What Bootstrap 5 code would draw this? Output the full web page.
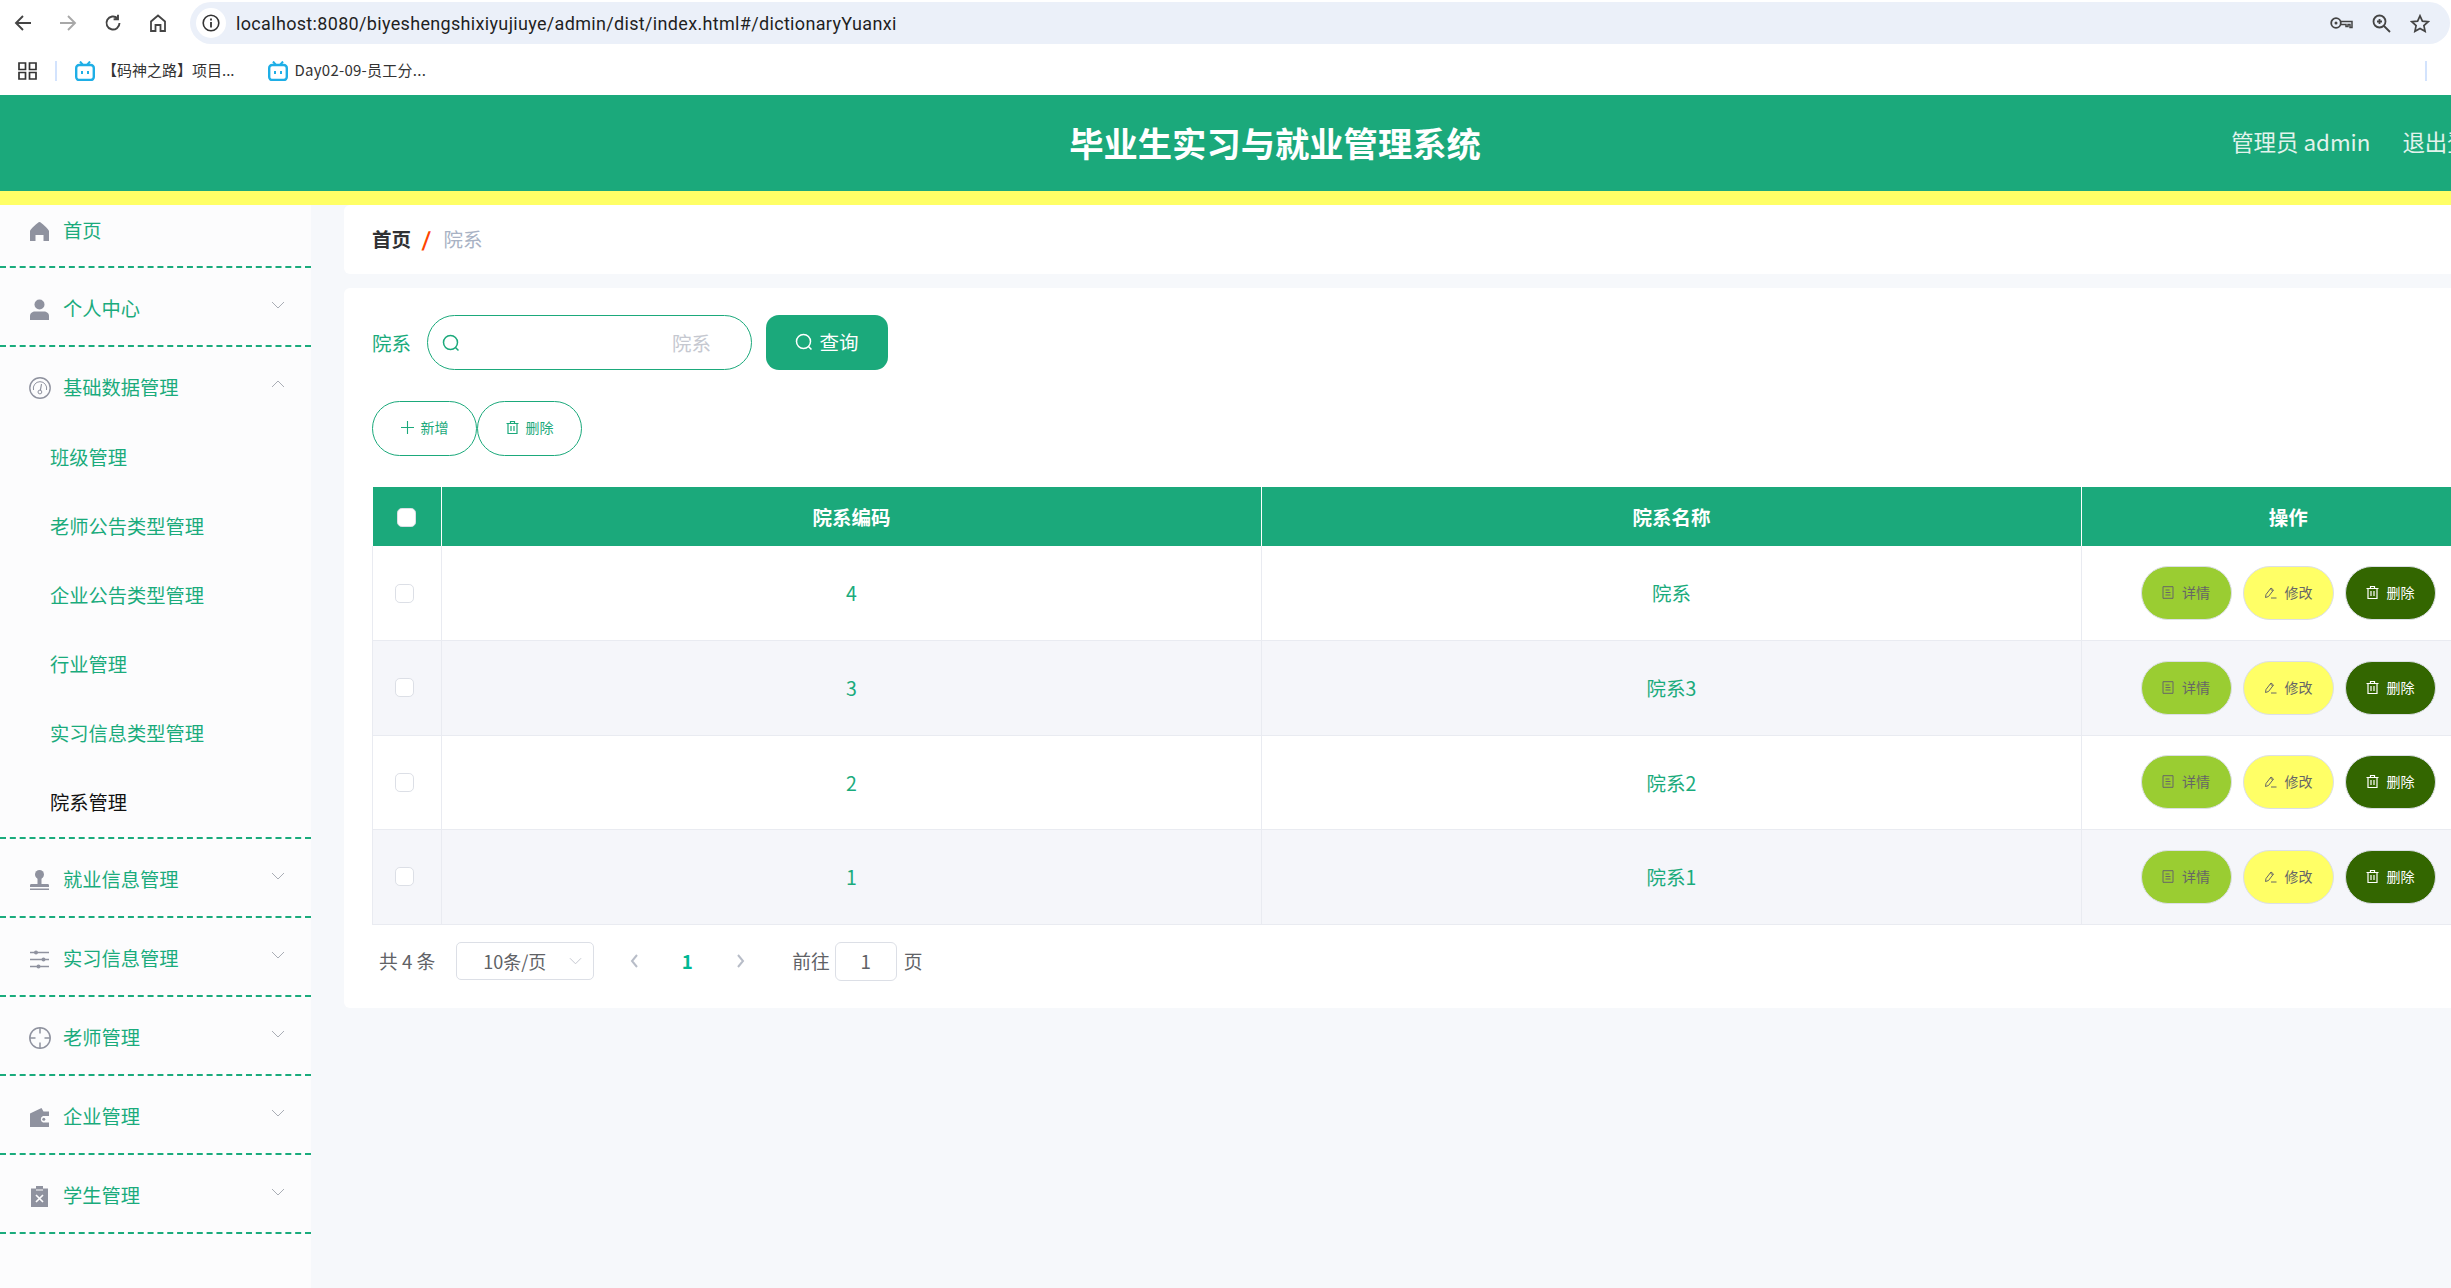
<!DOCTYPE html>
<html lang="zh-CN">
<head>
<meta charset="utf-8">
<title>毕业生实习与就业管理系统</title>
<link href="https://cdn.jsdelivr.net/npm/bootstrap@5.3.0/dist/css/bootstrap.min.css" rel="stylesheet">
<style>
html,body{height:100%;overflow:hidden}
body{background:#f6f8fb;font-family:"Noto Sans CJK SC","Noto Sans",sans-serif;width:2451px}
.toolbar{height:46px;background:#fff}
.tb-nav{width:190px;flex:none}
.tb-icon{width:45px;flex:none;justify-content:center}
.urlbar{width:2260px;height:42px;margin:2px 0;background:#ebf0f9;border-radius:21px;padding:0 20px 0 6px}
.url-info{width:30px;height:30px;background:#fff;border-radius:50%;margin-right:10px}
.url-text{font-family:"Roboto",sans-serif;font-size:18px;color:#1f1f1f;letter-spacing:.33px;white-space:nowrap}
.url-end{gap:19px}
.bookmarks{height:49px;background:#fff;padding-left:18px;font-size:15px;color:#333;white-space:nowrap}
.bm-sep{width:2px;height:20px;background:#d3e3fd;margin:0 18px 0 18px}
.bm-sep-r{margin:0 24px 0 auto}
.bm{gap:7px;margin-right:33px}
.bm-latin{letter-spacing:.25px}
.app-header{width:2550px;height:96px;background:#1ba97b;color:#fff}
.app-title{font-size:34.3px;font-weight:700;margin:0}
.app-user{right:0;top:0;height:96px;padding:0 58px 3px 0;font-size:22.4px;color:#e2f3ec;gap:32px}
.stripe{height:14px;background:#ffff66;width:2550px}
.layout{width:2550px;height:1083px}
.sidebar{width:311px;flex:none;background:#fcfcfd;color:#1aab7c;font-size:19.25px}
.side-item{border-bottom:2px dashed #1aab7c}
.side-row{height:77px;padding:5px 26px 0 30px;line-height:1}
.side-row>span{padding-bottom:1px}
.side-row.first{height:61px;padding:0 26px 9px 30px}
.side-row.open{height:76px;padding-top:6px}
.side-ico{width:19px;height:21px;margin-right:14px;flex:none;color:#8f929f}
.side-ico.wide{width:22px;height:22px;margin:0 12.5px 0 -1.5px}
.chev{margin:-8px 0 0 auto;color:#a9adb5}
.sub{height:69px;padding:0 0 0 50px;line-height:1}
.sub.active{color:#111}
.main{flex:1;min-width:0;padding:0 27px 0 33px}
.crumbs{height:69px;background:#fff;border-radius:6px;margin-bottom:14px;padding:0 28px 2px;font-size:19.5px}
.crumbs b{color:#303133;font-weight:700}
.crumbs i{color:#ff4500;font-weight:800;margin:0 13px 0 12px;font-style:normal;transform:skewX(-8deg)}
.crumbs span{color:#a8b2c4}
.panel{background:#fff;border-radius:6px;padding:27px 28px 0;height:720px}
.filter-label{color:#1aab7c;font-size:19.5px;width:38px;margin-right:17px;white-space:nowrap}
.search{width:325px;height:55px;border:1.5px solid #1ba97b;border-radius:28px;padding:0 40px 0 14px;margin-right:14px;background:#fff}
.search input{border:0;background:transparent;padding:0;font-size:19.5px;text-align:right;box-shadow:none;font-family:inherit}
.search input::placeholder{color:#c5c8d0;opacity:1}
.btn-query{width:122px;height:55px;background:#1ba97b;color:#fff;border:0;border-radius:13px;font-size:19.5px;gap:6px;padding:0 0 2px}
.btn-query:hover{background:#1ba97b;color:#fff}
.tools{margin:31px 0 31px;gap:0}
.btn-tool{width:105px;height:55px;border:1.5px solid #1ba97b;border-radius:28px;background:#fff;color:#1ba97b;font-size:14px;gap:7px;padding:0 0 2px}
.grid{table-layout:fixed;width:100%;margin:0;border-color:#e9ebf1;color:#1aab7c;font-size:19.5px;line-height:1.2}
.grid th{background:#1ba97b;color:#fff;height:59px;padding:1px 0 0;text-align:center;vertical-align:middle;font-weight:700;border-color:#fff;border-width:0 1px 0 0}
.grid td{height:94.5px;padding:0;text-align:center;vertical-align:middle;border-width:0 1px 1px 1px;border-color:#e9ebf1}
.grid tbody tr:nth-child(even) td{background:#f5f6fa}
.grid th:last-child{border-right:0}
.check{display:block;width:19px;height:19px;margin:0 auto!important;border-radius:3px;border:1px solid #dcdfe6;background:#fff;float:none}
td .check{position:relative;left:-3px}
.acts{gap:11px;justify-content:center}
.act{width:91px;height:54px;border-radius:27px;border:1.5px solid #dcdfe6;font-size:14px;color:#666;gap:8px;padding:0 0 1px}
.act:hover{color:#666}
.act-view,.act-view:hover{background:#9acd32}
.act-edit,.act-edit:hover{background:#ffff66}
.act-del,.act-del:hover{background:#336600;color:#fff}
.pager{height:76px;padding:0 0 3px 7px;color:#606266;font-size:18.75px;white-space:nowrap}
.pg-select{width:138px;height:38px;border:1.5px solid #dcdfe6;border-radius:5px;margin:0 0 0 21px;padding:0 11px 0 26px;color:#606266;font-size:18px}
.pg-nav{width:14px;color:#b8bdc8}
.pg-prev{margin-left:33px}
.pg-cur{color:#00b894;font-weight:700;width:12px;text-align:center;margin:0 41px 0 40px}
.pg-goto{margin-left:44px}
.pg-input{width:62px;height:39px;border:1.5px solid #dcdfe6;border-radius:6px;margin:0 7px 0 5px}
</style>
</head>
<body>
<svg width="0" height="0" class="d-block position-absolute">
<defs>
<symbol id="i-doc" viewBox="0 0 12 13"><path d="M1 .7h10v11.600H1zM3.500 4h4M3.500 6.500h5M3.500 9h5" fill="none" stroke="currentColor"/></symbol>
<symbol id="i-pen" viewBox="0 0 13 13"><path d="M1.500 11.500l.5-3 5-6.500 2.500 2-5 6.500zM6.300 3l2.500 2M7 12h5.500" fill="none" stroke="currentColor"/></symbol>
<symbol id="i-trash" viewBox="0 0 13 13"><path d="M.5 2.500h12M4.500 2.500v-2h4v2M2 2.500h9v10H2zM5 5v5M8 5v5" fill="none" stroke="currentColor" stroke-width="1.200"/></symbol>
<symbol id="i-search" viewBox="0 0 18 18"><circle cx="8.500" cy="8.500" r="7" fill="none" stroke="currentColor" stroke-width="1.500"/><path d="M13.500 13.500l3 3" stroke="currentColor" stroke-width="1.500"/></symbol>
<symbol id="i-down" viewBox="0 0 14 8"><path d="M1 1l6 6 6-6" fill="none" stroke="currentColor" stroke-width="1"/></symbol>
<symbol id="i-tv" viewBox="0 0 20 20"><path d="M5 .5l3 3.500M15 .5l-3 3.500" stroke="#1eaee6" stroke-width="2"/><rect x="1.200" y="4" width="17.600" height="15" rx="3" fill="#fff" stroke="#1eaee6" stroke-width="2.400"/><path d="M7 10v3M13 10v3" stroke="#1eaee6" stroke-width="2"/></symbol>
</defs>
</svg>

<div class="toolbar d-flex align-items-center">
  <div class="tb-nav d-flex align-items-center">
    <div class="tb-icon d-flex"><svg width="18" height="18" viewBox="0 0 18 18"><path d="M17 9H2M9 2L2 9l7 7" fill="none" stroke="#444" stroke-width="1.900"/></svg></div>
    <div class="tb-icon d-flex"><svg width="18" height="18" viewBox="0 0 18 18"><path d="M1 9h15M9 2l7 7-7 7" fill="none" stroke="#a8a8a8" stroke-width="1.900"/></svg></div>
    <div class="tb-icon d-flex"><svg width="18" height="18" viewBox="0 0 18 18"><path d="M15.500 9a6.500 6.500 0 1 1-2-4.700M14 .8v4.400H9.600" fill="none" stroke="#444" stroke-width="1.900"/></svg></div>
    <div class="tb-icon d-flex"><svg width="18" height="18" viewBox="0 0 18 18"><path d="M2 17V7.500L9 1.500l7 6V17h-4.500v-6h-5v6z" fill="none" stroke="#444" stroke-width="1.800"/></svg></div>
  </div>
  <div class="urlbar d-flex align-items-center">
    <div class="url-info d-flex align-items-center justify-content-center"><svg width="18" height="18" viewBox="0 0 18 18"><circle cx="9" cy="9" r="7.800" fill="none" stroke="#333" stroke-width="1.600"/><path d="M9 8v5.500M9 4.500v2" stroke="#333" stroke-width="1.800"/></svg></div>
    <span class="url-text">localhost:8080/biyeshengshixiyujiuye/admin/dist/index.html#/dictionaryYuanxi</span>
    <div class="url-end ms-auto d-flex align-items-center">
      <svg width="23" height="14" viewBox="0 0 23 14"><circle cx="6" cy="7" r="4.800" fill="none" stroke="#444" stroke-width="1.800"/><circle cx="6" cy="7" r="1.500" fill="#444"/><path d="M11 5.500h11v6h-2V8.500h-2v2h-2v-2h-5" fill="none" stroke="#444" stroke-width="1.500"/></svg>
      <svg width="19" height="19" viewBox="0 0 19 19"><circle cx="7.500" cy="7.500" r="6" fill="none" stroke="#444" stroke-width="1.800"/><path d="M12 12l6 6M7.500 5v5M5 7.500h5" stroke="#444" stroke-width="1.800"/></svg>
      <svg width="20" height="19" viewBox="0 0 20 19"><path d="M10 1.800l2.400 5.300 5.800.6-4.300 3.900 1.200 5.700-5.100-2.900-5.100 2.900 1.200-5.700-4.300-3.900 5.800-.6z" fill="none" stroke="#444" stroke-width="1.700"/></svg>
    </div>
  </div>
</div>
<div class="bookmarks d-flex align-items-center">
  <svg width="19" height="18" viewBox="0 0 19 18"><path d="M1 1h6.500v6.500H1zM11.500 1H18v6.500h-6.500zM1 10.500h6.500V17H1zM11.500 10.500H18V17h-6.500z" fill="none" stroke="#333" stroke-width="1.700"/></svg>
  <div class="bm-sep"></div>
  <div class="bm d-flex align-items-center"><svg width="20" height="20"><use href="#i-tv"/></svg><span>【码神之路】项目...</span></div>
  <div class="bm d-flex align-items-center"><svg width="20" height="20"><use href="#i-tv"/></svg><span class="bm-latin">Day02-09-员工分...</span></div>
  <div class="bm-sep bm-sep-r"></div>
</div>

<header class="app-header position-relative d-flex align-items-center justify-content-center">
  <h1 class="app-title">毕业生实习与就业管理系统</h1>
  <div class="app-user position-absolute d-flex align-items-center"><span>管理员 admin</span><span>退出登录</span></div>
</header>
<div class="stripe"></div>

<div class="layout d-flex">
  <aside class="sidebar">
    <ul class="list-unstyled m-0">
      <li class="side-item"><div class="side-row first d-flex align-items-center">
        <svg class="side-ico" viewBox="0 0 19 21"><path d="M9.500 1C11 1 19 8.500 19 10v10h-5.500v-6h-8v6H0V10C0 8.500 8 1 9.500 1z" fill="currentColor"/></svg><span>首页</span></div></li>
      <li class="side-item"><div class="side-row d-flex align-items-center">
        <svg class="side-ico" viewBox="0 0 19 21"><circle cx="9.500" cy="5.500" r="5" fill="currentColor"/><path d="M0 21v-4c0-3 2.500-4.500 5-4.500h9c2.500 0 5 1.500 5 4.500v4z" fill="currentColor"/></svg><span>个人中心</span><svg class="chev" width="14" height="8"><use href="#i-down"/></svg></div></li>
      <li class="side-item"><div class="side-row open d-flex align-items-center">
        <svg class="side-ico wide" viewBox="0 0 22 22"><circle cx="11" cy="11" r="10.200" fill="none" stroke="currentColor" stroke-width="1.400"/><path d="M4.500 13a6.700 6.700 0 1 1 13 0" fill="none" stroke="currentColor"/><path d="M12.500 7l-1.200 6.500" stroke="currentColor" stroke-width="1.200"/><circle cx="10.900" cy="15" r="1.900" fill="none" stroke="currentColor"/></svg><span>基础数据管理</span><svg class="chev" width="14" height="8" style="transform:scaleY(-1)"><use href="#i-down"/></svg></div>
        <div class="sub d-flex align-items-center">班级管理</div>
        <div class="sub d-flex align-items-center">老师公告类型管理</div>
        <div class="sub d-flex align-items-center">企业公告类型管理</div>
        <div class="sub d-flex align-items-center">行业管理</div>
        <div class="sub d-flex align-items-center">实习信息类型管理</div>
        <div class="sub active d-flex align-items-center">院系管理</div>
      </li>
      <li class="side-item"><div class="side-row d-flex align-items-center">
        <svg class="side-ico" viewBox="0 0 19 21"><circle cx="9.500" cy="4.500" r="4.500" fill="currentColor"/><path d="M7.500 8h4v6h6c1 0 1.500.5 1.500 1.500V17H0v-1.500C0 14.500.5 14 1.500 14h6zM0 18.500h19V20H0z" fill="currentColor"/></svg><span>就业信息管理</span><svg class="chev" width="14" height="8"><use href="#i-down"/></svg></div></li>
      <li class="side-item"><div class="side-row d-flex align-items-center">
        <svg class="side-ico" viewBox="0 0 19 21"><path d="M0 3.500h19M0 10.500h19M0 17.500h19" stroke="currentColor" stroke-width="1.300"/><circle cx="6" cy="3.500" r="2" fill="currentColor"/><circle cx="13.500" cy="10.500" r="2" fill="currentColor"/><circle cx="8.500" cy="17.500" r="2" fill="currentColor"/></svg><span>实习信息管理</span><svg class="chev" width="14" height="8"><use href="#i-down"/></svg></div></li>
      <li class="side-item"><div class="side-row d-flex align-items-center">
        <svg class="side-ico wide" viewBox="0 0 22 22"><circle cx="11" cy="11" r="10.200" fill="none" stroke="currentColor" stroke-width="1.500"/><path d="M11 1v5.500M11 15.500V21M1 11h5.500M15.500 11H21" stroke="currentColor" stroke-width="1.500"/></svg><span>老师管理</span><svg class="chev" width="14" height="8"><use href="#i-down"/></svg></div></li>
      <li class="side-item"><div class="side-row d-flex align-items-center">
        <svg class="side-ico" viewBox="0 0 19 21"><path d="M0 6.500L11.500 1l2 3.500H19V9h-6a3.500 3.500 0 0 0 0 6.500h6V20H0z" fill="currentColor"/><circle cx="13.800" cy="12.300" r="1.500" fill="currentColor"/></svg><span>企业管理</span><svg class="chev" width="14" height="8"><use href="#i-down"/></svg></div></li>
      <li class="side-item"><div class="side-row d-flex align-items-center">
        <svg class="side-ico" viewBox="0 0 19 21"><path d="M6 0h7v2.500h5V21H1V2.500h5z" fill="currentColor"/><path d="M6 9l7 7M13 9l-7 7" stroke="#fcfcfd" stroke-width="1.700"/><path d="M6 4h7" stroke="#fcfcfd"/></svg><span>学生管理</span><svg class="chev" width="14" height="8"><use href="#i-down"/></svg></div></li>
    </ul>
  </aside>

  <main class="main">
    <nav class="crumbs d-flex align-items-center"><b>首页</b><i>/</i><span>院系</span></nav>
    <section class="panel">
      <div class="d-flex align-items-center">
        <label class="filter-label">院系</label>
        <div class="search d-flex align-items-center">
          <svg width="18" height="18" class="flex-shrink-0" style="color:#1ba97b"><use href="#i-search"/></svg>
          <input class="form-control" type="text" placeholder="院系">
        </div>
        <button class="btn btn-query d-flex align-items-center justify-content-center" type="button"><svg width="18" height="18"><use href="#i-search"/></svg>查询</button>
      </div>
      <div class="tools d-flex">
        <button class="btn btn-tool d-flex align-items-center justify-content-center" type="button"><svg width="13" height="13" viewBox="0 0 13 13"><path d="M6.500 0v13M0 6.500h13" stroke="currentColor" stroke-width="1.100"/></svg>新增</button>
        <button class="btn btn-tool d-flex align-items-center justify-content-center" type="button"><svg width="13" height="13"><use href="#i-trash"/></svg>删除</button>
      </div>
      <table class="table grid">
        <colgroup><col style="width:69px"><col style="width:820px"><col style="width:820px"><col></colgroup>
        <thead><tr><th><input class="form-check-input check" type="checkbox" aria-label="全选"></th><th>院系编码</th><th>院系名称</th><th>操作</th></tr></thead>
        <tbody>
          <tr><td><input class="form-check-input check" type="checkbox" aria-label="选择"></td><td>4</td><td>院系</td><td><div class="acts d-flex">
            <button class="btn act act-view d-flex align-items-center justify-content-center" type="button"><svg width="12" height="13"><use href="#i-doc"/></svg>详情</button>
            <button class="btn act act-edit d-flex align-items-center justify-content-center" type="button"><svg width="13" height="13"><use href="#i-pen"/></svg>修改</button>
            <button class="btn act act-del d-flex align-items-center justify-content-center" type="button"><svg width="13" height="13"><use href="#i-trash"/></svg>删除</button></div></td></tr>
          <tr><td><input class="form-check-input check" type="checkbox" aria-label="选择"></td><td>3</td><td>院系3</td><td><div class="acts d-flex">
            <button class="btn act act-view d-flex align-items-center justify-content-center" type="button"><svg width="12" height="13"><use href="#i-doc"/></svg>详情</button>
            <button class="btn act act-edit d-flex align-items-center justify-content-center" type="button"><svg width="13" height="13"><use href="#i-pen"/></svg>修改</button>
            <button class="btn act act-del d-flex align-items-center justify-content-center" type="button"><svg width="13" height="13"><use href="#i-trash"/></svg>删除</button></div></td></tr>
          <tr><td><input class="form-check-input check" type="checkbox" aria-label="选择"></td><td>2</td><td>院系2</td><td><div class="acts d-flex">
            <button class="btn act act-view d-flex align-items-center justify-content-center" type="button"><svg width="12" height="13"><use href="#i-doc"/></svg>详情</button>
            <button class="btn act act-edit d-flex align-items-center justify-content-center" type="button"><svg width="13" height="13"><use href="#i-pen"/></svg>修改</button>
            <button class="btn act act-del d-flex align-items-center justify-content-center" type="button"><svg width="13" height="13"><use href="#i-trash"/></svg>删除</button></div></td></tr>
          <tr><td><input class="form-check-input check" type="checkbox" aria-label="选择"></td><td>1</td><td>院系1</td><td><div class="acts d-flex">
            <button class="btn act act-view d-flex align-items-center justify-content-center" type="button"><svg width="12" height="13"><use href="#i-doc"/></svg>详情</button>
            <button class="btn act act-edit d-flex align-items-center justify-content-center" type="button"><svg width="13" height="13"><use href="#i-pen"/></svg>修改</button>
            <button class="btn act act-del d-flex align-items-center justify-content-center" type="button"><svg width="13" height="13"><use href="#i-trash"/></svg>删除</button></div></td></tr>
        </tbody>
      </table>
      <div class="pager d-flex align-items-center">
        <span>共 4 条</span>
        <div class="pg-select d-flex align-items-center justify-content-between"><span>10条/页</span><svg width="13" height="8" style="color:#c0c4cc"><use href="#i-down"/></svg></div>
        <svg class="pg-nav pg-prev" width="10" height="16" viewBox="0 0 10 16"><path d="M8 2L3 8l5 6" fill="none" stroke="currentColor" stroke-width="2"/></svg>
        <span class="pg-cur">1</span>
        <svg class="pg-nav" width="10" height="16" viewBox="0 0 10 16"><path d="M2 2l5 6-5 6" fill="none" stroke="currentColor" stroke-width="2"/></svg>
        <span class="pg-goto">前往</span>
        <div class="pg-input d-flex align-items-center justify-content-center">1</div>
        <span>页</span>
      </div>
    </section>
  </main>
</div>
<script src="https://cdn.jsdelivr.net/npm/bootstrap@5.3.0/dist/js/bootstrap.bundle.min.js"></script>
</body>
</html>
